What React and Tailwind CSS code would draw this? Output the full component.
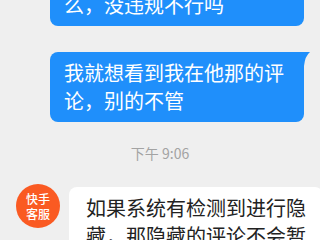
export default function App() {
  const font = { fontFamily: '"Noto Sans CJK SC", "Noto Sans", sans-serif' }

  return (
    <div
      className="w-[320px] h-[240px] overflow-hidden bg-[#efefef] flex flex-col"
      style={font}
    >
      {/* previous outgoing message, top cut off */}
      <div className="flex justify-end pr-[16px] mt-[-9px]">
        <div className="w-[254px] bg-[#1f8ffb] text-white text-[20px] leading-[28px] px-[14px] pb-[7px] rounded-b-[8px]">
          么，没违规不行吗
        </div>
      </div>

      {/* outgoing message with tail */}
      <div className="flex justify-end pr-[16px] mt-[26px]">
        <div className="relative w-[254px] bg-[#1f8ffb] text-white text-[20px] leading-[28px] px-[14px] py-[7px] rounded-l-[8px] rounded-br-[8px]">
          <div className="whitespace-nowrap">我就想看到我在他那的评</div>
          <div className="whitespace-nowrap">论，别的不管</div>
          <svg
            className="absolute top-0 right-[-7px]"
            width="8"
            height="14"
            viewBox="0 0 8 14"
          >
            <path d="M0 0 L7 0 Q2 4 1 14 L0 14 Z" fill="#1f8ffb" />
          </svg>
        </div>
      </div>

      {/* time stamp */}
      <div className="mt-[21px] text-center text-[14px] leading-[20px] text-[#a3a3a3]">
        下午 9:06
      </div>

      {/* incoming message */}
      <div className="flex items-start pl-[16px] gap-[9px] mt-[21px]">
        <div className="w-[44px] h-[44px] shrink-0 rounded-full bg-[#fa5a22] text-white flex flex-col items-center justify-center text-[12px] leading-[15px] font-medium">
          <span className="block">快手</span>
          <span className="block">客服</span>
        </div>
        <div className="mt-[3px] w-[254px] shrink-0 bg-white text-[#222222] text-[20px] leading-[28px] pl-[17px] pr-[14px] py-[7px] rounded-[8px]">
          <div className="whitespace-nowrap">如果系统有检测到进行隐</div>
          <div className="whitespace-nowrap">藏，那隐藏的评论不会暂</div>
        </div>
      </div>
    </div>
  )
}
